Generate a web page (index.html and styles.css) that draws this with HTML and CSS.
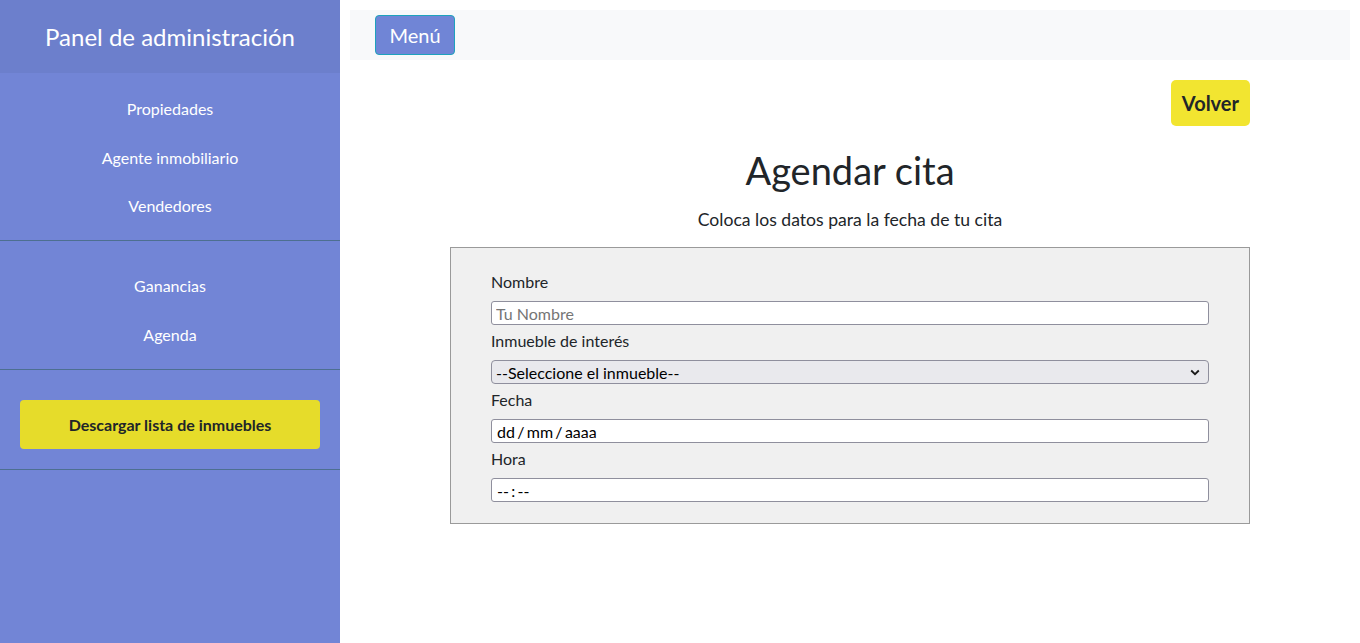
FILE: index.html
```html
<!DOCTYPE html>
<html lang="es">
<head>
<meta charset="utf-8">
<title>Agendar cita</title>
<link rel="stylesheet" href="styles.css">
</head>
<body>
<aside class="sidebar">
  <div class="sidebar-header">Panel de administración</div>
  <nav class="nav-group nav-first">
    <a class="nav-link" href="#">Propiedades</a>
    <a class="nav-link" href="#">Agente inmobiliario</a>
    <a class="nav-link" href="#">Vendedores</a>
  </nav>
  <nav class="nav-group nav-second">
    <a class="nav-link" href="#">Ganancias</a>
    <a class="nav-link" href="#">Agenda</a>
  </nav>
  <div class="nav-group nav-third">
    <button class="download-btn">Descargar lista de inmuebles</button>
  </div>
</aside>
<main class="main">
  <div class="topbar">
    <button class="menu-btn">Menú</button>
  </div>
  <div class="content">
    <div class="actions">
      <button class="back-btn">Volver</button>
    </div>
    <h1 class="title">Agendar cita</h1>
    <p class="subtitle">Coloca los datos para la fecha de tu cita</p>
    <form class="form">
      <label class="label" for="nombre">Nombre</label>
      <input class="field" id="nombre" type="text" placeholder="Tu Nombre">
      <label class="label" for="inmueble">Inmueble de interés</label>
      <div class="select-wrap">
        <select class="field select" id="inmueble">
          <option>--Seleccione el inmueble--</option>
        </select>
        <svg class="chevron" width="10" height="7" viewBox="0 0 10 7"><path d="M1.2 1.5 L5 5.2 L8.8 1.5" fill="none" stroke="#1a1a1a" stroke-width="1.8"/></svg>
      </div>
      <label class="label" for="fecha">Fecha</label>
      <input class="field field-tight" id="fecha" type="text" value="dd / mm / aaaa" readonly>
      <label class="label" for="hora">Hora</label>
      <input class="field field-tight" id="hora" type="text" value="-- : --" readonly>
    </form>
  </div>
</main>
</body>
</html>
```

FILE: styles.css
```css
* { box-sizing: border-box; }
html, body { height: 100%; }
body {
  margin: 0;
  display: flex;
  font-family: Lato, "Noto Sans", sans-serif;
  color: #212529;
  background: #fff;
}
.sidebar {
  width: 340px;
  flex: 0 0 340px;
  min-height: 100%;
  background: #7285d6;
  display: flex;
  flex-direction: column;
}
.sidebar-header {
  height: 73px;
  background: #6c7fcc;
  color: #fff;
  font-size: 24px;
  display: flex;
  align-items: center;
  justify-content: center;
  padding-bottom: 1px;
}
.nav-group {
  display: flex;
  flex-direction: column;
  border-bottom: 1px solid #4d6f90;
}
.nav-first { padding: 11.5px 0 10px; }
.nav-second { padding: 20.5px 0 10.5px; }
.nav-third { padding: 30px 20px 20px; }
.nav-link {
  display: flex;
  align-items: center;
  justify-content: center;
  height: 48.5px;
  color: #fff;
  font-size: 16px;
  text-decoration: none;
}
.download-btn {
  height: 49px;
  border: none;
  border-radius: 4px;
  background: #e6dc2a;
  color: #212529;
  font-family: Lato, sans-serif;
  font-weight: 700;
  font-size: 16px;
}
.main {
  flex: 1;
  padding: 10px;
}
.topbar {
  background: #f8f9fa;
  height: 50px;
  padding: 5px 25px;
  display: flex;
  align-items: center;
}
.menu-btn {
  height: 40px;
  width: 80px;
  background: #7085d6;
  border: 1px solid #1ea2bd;
  border-radius: 4px;
  color: #fff;
  font-family: Lato, sans-serif;
  font-size: 20px;
  padding: 0 0 1px;
}
.content {
  width: 800px;
  margin: 0 auto;
}
.actions {
  display: flex;
  justify-content: flex-end;
  padding-top: 20px;
}
.back-btn {
  height: 46px;
  padding: 0 11px;
  background: #f2e530;
  border: none;
  border-radius: 5px;
  color: #212529;
  font-family: Lato, sans-serif;
  font-weight: 700;
  font-size: 20px;
}
.title {
  margin: 21px 0 12px;
  text-align: center;
  font-weight: 400;
  font-size: 38px;
  line-height: 47px;
}
.subtitle {
  margin: 0 0 14px;
  text-align: center;
  font-size: 17.6px;
  line-height: 27px;
}
.form {
  background: #f0f0f0;
  border: 1px solid #9a9a9a;
  padding: 22px 40px 17px;
  display: flex;
  flex-direction: column;
}
.label {
  display: block;
  font-size: 16px;
  line-height: 24px;
  margin-bottom: 7px;
}
.field {
  display: block;
  width: 100%;
  height: 24px;
  margin: 0 0 4px;
  padding: 0 4px;
  border: 1px solid #8f8f9d;
  border-radius: 3px;
  background: #fff;
  font-family: Lato, sans-serif;
  font-size: 16px;
  color: #000;
}
.field::placeholder { color: #757575; }
.field-tight { padding-left: 5px; word-spacing: -1.8px; }
.select-wrap { position: relative; }
.select {
  appearance: none;
  -webkit-appearance: none;
  background: #e9e9ed;
  border-radius: 4px;
  height: 24px;
  padding-left: 4px;
}
.chevron {
  position: absolute;
  right: 9px;
  top: 9px;
  pointer-events: none;
}
```
